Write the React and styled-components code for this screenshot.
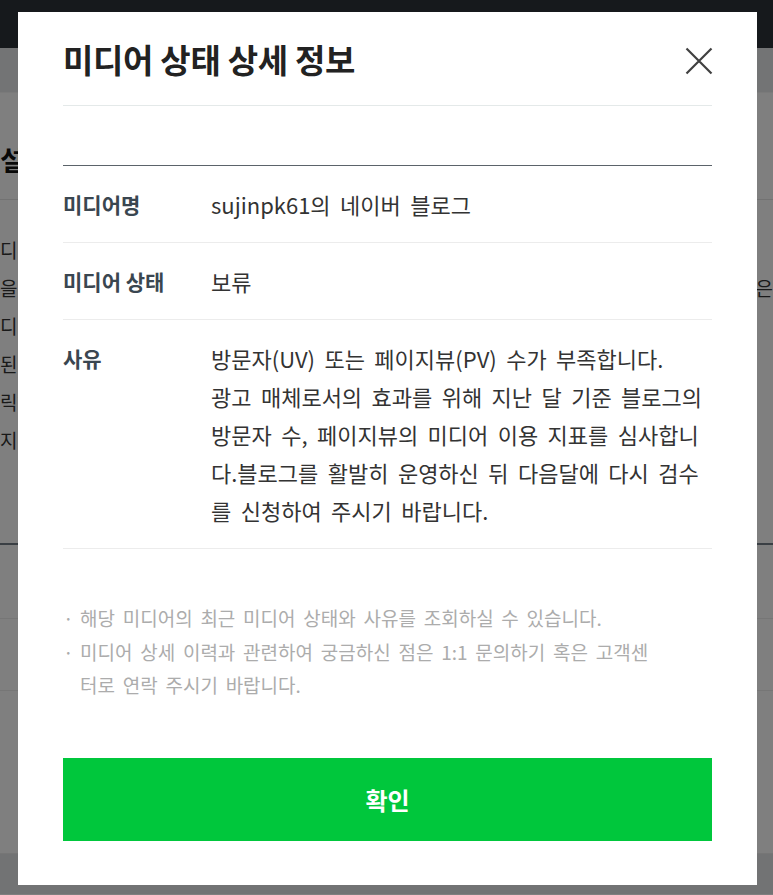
import styled, { createGlobalStyle } from "styled-components"

const GlobalStyle = createGlobalStyle`
  * { box-sizing: border-box; }
  html, body {
    margin: 0;
    padding: 0;
    height: 100%;
    overflow: hidden;
    font-family: "Noto Sans CJK KR", "Noto Sans", sans-serif;
  }
`

const Page = styled.div`
  min-height: 100vh;
  background: #fff;
`

const TopBar = styled.header`
  height: 48px;
  background: #2c3238;
`

const TabBar = styled.nav`
  height: 45px;
  background: #e6e8ea;
  border-bottom: 1px solid #f4f4f4;
`

const PageTitle = styled.h2`
  margin: 0;
  height: 107px;
  padding-top: 26px;
  display: flex;
  align-items: center;
  font-size: 27px;
  font-weight: 700;
  color: #111;
  border-bottom: 1px solid #e4e4e4;
  white-space: nowrap;
`

const PageText = styled.div`
  padding: 31px 0 0;
  height: 345px;
  font-size: 19px;
  line-height: 38px;
  color: #333;
  border-bottom: 2px solid #757e88;
`

const PageLine = styled.div`
  display: flex;
  justify-content: space-between;
  white-space: nowrap;
`

const PageRow = styled.div`
  height: ${(p) => p.h}px;
  border-bottom: 1px solid #ececec;
`

const PageFooter = styled.footer`
  height: 40px;
  background: #e4e6e8;
`

const Overlay = styled.div`
  position: fixed;
  inset: 0;
  background: rgba(0, 0, 0, 0.5);
  display: flex;
  align-items: center;
  justify-content: center;
`

const Modal = styled.div`
  width: 739px;
  margin: 2px 0 0 2px;
  background: #fff;
  padding: 0 45px 44px;
  color: #333;
`

const Header = styled.div`
  display: flex;
  align-items: center;
  justify-content: space-between;
  padding: 27px 0 26px;
  border-bottom: 1px solid #e4e9e9;
`

const Title = styled.h1`
  margin: 0;
  font-size: 33px;
  line-height: 40px;
  font-weight: 700;
  color: #222;
  letter-spacing: -0.3px;
`

const CloseButton = styled.button`
  width: 30px;
  height: 30px;
  padding: 0;
  margin: 4px -2px 0 0;
  border: 0;
  background: none;
  cursor: pointer;
  display: flex;
  align-items: center;
  justify-content: center;
`

const Table = styled.dl`
  margin: 59px 0 0;
  border-top: 1px solid #5b636a;
`

const Row = styled.div`
  display: flex;
  padding: 19px 0;
  border-bottom: 1px solid #ececec;
`

const Label = styled.dt`
  flex: 0 0 148px;
  font-size: 21px;
  line-height: 38px;
  font-weight: 700;
  color: #3a4650;
`

const Value = styled.dd`
  flex: 1;
  margin: 0;
  font-size: 22px;
  line-height: 38px;
  color: #333;
  word-spacing: 4.5px;
`

const Notes = styled.ul`
  list-style: none;
  margin: 52px 0 0;
  padding: 0 50px 0 0;
`

const Note = styled.li`
  position: relative;
  padding-left: 17px;
  font-size: 19px;
  line-height: 33.5px;
  color: #acacac;
  word-spacing: 3.5px;

  &::before {
    content: "·";
    position: absolute;
    left: 0;
    top: 0;
  }
`

const ConfirmButton = styled.button`
  display: block;
  width: 100%;
  height: 83px;
  margin-top: 56px;
  border: 0;
  background: #00c73c;
  color: #fff;
  font-family: inherit;
  font-size: 24px;
  font-weight: 700;
  cursor: pointer;
`

const rows = [
  { label: "미디어명", value: "sujinpk61의 네이버 블로그" },
  { label: "미디어 상태", value: "보류" },
]

const App = () => {
  return (
    <>
      <GlobalStyle />
      <Page>
        <TopBar />
        <TabBar />
        <PageTitle>설정</PageTitle>
        <PageText>
          <PageLine><span>디어</span></PageLine>
          <PageLine><span>을 확</span><span>은</span></PageLine>
          <PageLine><span>디어</span></PageLine>
          <PageLine><span>된 미</span></PageLine>
          <PageLine><span>릭하</span></PageLine>
          <PageLine><span>지의</span></PageLine>
        </PageText>
        <PageRow h={74} />
        <PageRow h={72} />
        <PageRow h={163} />
        <PageFooter />
      </Page>

      <Overlay>
        <Modal>
          <Header>
            <Title>미디어 상태 상세 정보</Title>
            <CloseButton aria-label="닫기">
              <svg width="28" height="28" viewBox="0 0 28 28">
                <path d="M1.5 1.5 L26.5 26.5 M26.5 1.5 L1.5 26.5" stroke="#404040" strokeWidth="2.2" fill="none" />
              </svg>
            </CloseButton>
          </Header>

          <Table>
            {rows.map((row) => (
              <Row key={row.label}>
                <Label>{row.label}</Label>
                <Value>{row.value}</Value>
              </Row>
            ))}
            <Row>
              <Label>사유</Label>
              <Value>
                방문자(UV) 또는 페이지뷰(PV) 수가 부족합니다.
                <br />
                광고 매체로서의 효과를 위해 지난 달 기준 블로그의 방문자 수, 페이지뷰의 미디어 이용 지표를 심사합니다.블로그를 활발히 운영하신 뒤 다음달에 다시 검수를 신청하여 주시기 바랍니다.
              </Value>
            </Row>
          </Table>

          <Notes>
            <Note>해당 미디어의 최근 미디어 상태와 사유를 조회하실 수 있습니다.</Note>
            <Note>미디어 상세 이력과 관련하여 궁금하신 점은 1:1 문의하기 혹은 고객센터로 연락 주시기 바랍니다.</Note>
          </Notes>

          <ConfirmButton>확인</ConfirmButton>
        </Modal>
      </Overlay>
    </>
  )
}

export default App
